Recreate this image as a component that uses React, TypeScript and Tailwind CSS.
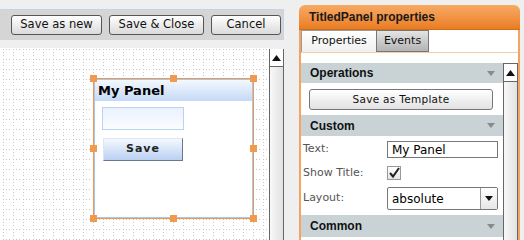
import React from "react";

const ToolbarButton = ({ label, width }: { label: string; width: string }) => (
  <button
    className={`${width} h-[20px] rounded-[3px] border border-[#555] bg-linear-to-b from-white to-[#dadada] text-[11.5px] text-[#111] font-['DejaVu_Sans',sans-serif] flex items-center justify-center`}
  >
    {label}
  </button>
);

const DownTriangle = ({ color = "#8a8a8a" }: { color?: string }) => (
  <svg width="8" height="5" viewBox="0 0 8 5">
    <polygon points="0,0 8,0 4,5" fill={color} />
  </svg>
);

const UpArrowBox = () => (
  <div className="h-[18px] border-b border-[#666] flex items-center justify-center bg-white">
    <svg width="9" height="6" viewBox="0 0 9 6">
      <polygon points="0,6 9,6 4.5,0" fill="#111" />
    </svg>
  </div>
);

const SectionHeader = ({ title, className = "" }: { title: string; className?: string }) => (
  <div
    className={`bg-[#c9d3d6] flex items-center justify-between pl-[9px] pr-[8px] ${className}`}
  >
    <span className="font-['Liberation_Sans',Arial,sans-serif] font-bold text-[12px] text-[#111]">
      {title}
    </span>
    <DownTriangle />
  </div>
);

const PropRow = ({
  label,
  className = "",
  children,
}: {
  label: string;
  className?: string;
  children: React.ReactNode;
}) => (
  <div className={`flex items-center ${className}`}>
    <span className="w-[86px] pl-[2px] text-[11px] text-[#555] font-['DejaVu_Sans',sans-serif]">
      {label}
    </span>
    {children}
  </div>
);

const Handle = ({ className }: { className: string }) => (
  <div className={`absolute w-[7px] h-[7px] bg-[#f19a4e] ${className}`} />
);

export default function App() {
  return (
    <div className="w-[524px] h-[240px] bg-[#efefef] flex overflow-hidden font-['DejaVu_Sans',sans-serif]">
      {/* designer column */}
      <div className="w-[284px] flex flex-col">
        <div className="h-[9px]" />
        <div className="h-[31px] bg-[#d5d5d5] border-t border-r border-[#c3d5ec] flex items-center gap-[7px] pl-[11px]">
          <ToolbarButton label="Save as new" width="w-[91px]" />
          <ToolbarButton label="Save & Close" width="w-[95px]" />
          <ToolbarButton label="Cancel" width="w-[70px]" />
        </div>
        <div className="h-[8px]" />
        <div className="flex-1 flex">
          <div className="relative flex-1 bg-white overflow-hidden">
            <svg className="absolute inset-0" width="100%" height="100%">
              <defs>
                <pattern id="grid" x="3" y="1" width="10" height="10" patternUnits="userSpaceOnUse">
                  <rect x="0" y="0" width="1" height="1" fill="#c6c6c6" />
                  <rect x="3" y="0" width="1" height="1" fill="#c6c6c6" />
                  <rect x="6" y="0" width="1" height="1" fill="#c6c6c6" />
                  <rect x="0" y="3" width="1" height="1" fill="#c6c6c6" />
                  <rect x="0" y="6" width="1" height="1" fill="#c6c6c6" />
                </pattern>
              </defs>
              <rect width="100%" height="100%" fill="url(#grid)" />
            </svg>

            {/* selected TitledPanel on the canvas */}
            <div className="absolute left-[93px] top-[30px] w-[161px] h-[141px] border border-[#f0994c]">
              <div className="w-full h-full border border-[#a9c6ee] bg-white flex flex-col">
                <div className="h-[21px] bg-linear-to-b from-[#f3f8ff] to-[#c5d9f6] flex items-center pl-[3px]">
                  <span className="font-bold text-[13px] text-black">My Panel</span>
                </div>
                <div className="ml-[7px] mt-[6px] w-[82px] h-[23px] border border-[#b9d3f3] bg-linear-to-b from-[#eaf2fe] to-[#fbfdff]" />
                <div className="ml-[8px] mt-[8px] w-[80px] h-[23px] border border-t-[#dbe6f6] border-l-[#dbe6f6] border-r-[#68788f] border-b-[#68788f] bg-linear-to-b from-[#f5f8fe] to-[#bad0f1] flex items-center justify-center">
                  <span className="font-bold text-[11px] tracking-[1px] text-[#222]">Save</span>
                </div>
              </div>
              <Handle className="-left-[4px] -top-[4px]" />
              <Handle className="left-[76px] -top-[4px]" />
              <Handle className="-right-[4px] -top-[4px]" />
              <Handle className="-left-[4px] top-[66px]" />
              <Handle className="-right-[4px] top-[66px]" />
              <Handle className="-left-[4px] -bottom-[4px]" />
              <Handle className="left-[76px] -bottom-[4px]" />
              <Handle className="-right-[4px] -bottom-[4px]" />
            </div>
          </div>
          <div className="w-[15px] mt-[1px] border-x border-[#666] bg-linear-to-r from-[#f8f8f8] to-[#e2e2e2] flex flex-col">
            <UpArrowBox />
          </div>
        </div>
      </div>

      {/* properties panel */}
      <div className="ml-[15px] mt-[5px] w-[221px] flex flex-col">
        <div className="h-[25px] rounded-t-[6px] bg-linear-to-b from-[#f7aa63] to-[#e97d20] border-b border-[#d46c14] flex items-center pl-[10px]">
          <span className="font-['Liberation_Sans',Arial,sans-serif] font-bold text-[12px] text-[#1a1a1a]">
            TitledPanel properties
          </span>
        </div>
        <div className="flex-1 bg-white border-x-2 border-[#f3a461] flex flex-col">
          <div className="h-[23px] flex items-end border-b border-[#f6cda9]">
            <div className="w-[75px] h-[22px] border-t border-l border-[#9a9a9a] bg-linear-to-b from-white to-[#f0f0f0] flex items-center justify-center text-[11px] text-[#111]">
              Properties
            </div>
            <div className="w-[53px] h-[22px] border border-[#777] bg-linear-to-b from-[#e4e4e4] to-[#b4b4b4] flex items-center justify-center text-[11px] text-[#111]">
              Events
            </div>
          </div>
          <div className="h-[10px]" />
          <div className="flex-1 flex">
            <div className="w-[202px] flex flex-col">
              <SectionHeader title="Operations" className="h-[20px]" />
              <button className="mt-[6px] ml-[8px] w-[184px] h-[21px] rounded-[3px] border border-[#777] bg-linear-to-b from-white to-[#e2e2e2] text-[10.5px] tracking-[0.3px] text-[#111] flex items-center justify-center">
                Save as Template
              </button>
              <SectionHeader title="Custom" className="mt-[5px] h-[21px]" />
              <PropRow label="Text:" className="mt-[5px] h-[17px]">
                <div className="w-[111px] h-[17px] border border-[#777] bg-white flex items-center pl-[4px] text-[12px] text-black">
                  My Panel
                </div>
              </PropRow>
              <PropRow label="Show Title:" className="mt-[8px] h-[14px]">
                <div className="w-[14px] h-[14px] border border-[#999] bg-linear-to-b from-white to-[#e6e6e6] flex items-center justify-center">
                  <svg width="12" height="12" viewBox="0 0 12 12">
                    <path d="M2 6 L5 9.5 L11 1" stroke="#222" strokeWidth="2" fill="none" />
                  </svg>
                </div>
              </PropRow>
              <PropRow label="Layout:" className="mt-[7px] h-[23px]">
                <div className="w-[111px] h-[23px] border border-[#777] rounded-[2px] bg-white flex">
                  <span className="flex-1 pl-[4px] text-[12px] text-black flex items-center">absolute</span>
                  <div className="w-[17px] border-l border-[#999] bg-linear-to-b from-white to-[#e6e6e6] flex items-center justify-center">
                    <DownTriangle color="#111" />
                  </div>
                </div>
              </PropRow>
              <SectionHeader title="Common" className="mt-[5px] h-[22px]" />
            </div>
            <div className="w-[15px] border-x border-[#666] bg-linear-to-r from-[#f8f8f8] to-[#e2e2e2] flex flex-col">
              <div className="border-t border-[#666]">
                <UpArrowBox />
              </div>
            </div>
          </div>
        </div>
      </div>
    </div>
  );
}
